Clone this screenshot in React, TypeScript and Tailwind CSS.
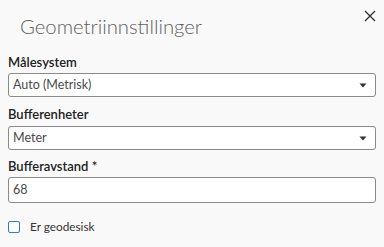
import React from "react";

const font = { fontFamily: "Lato, 'Open Sans', sans-serif" };

function Caret() {
  return (
    <svg width="8" height="5" viewBox="0 0 8 5" className="shrink-0">
      <path d="M0.5 0.5 L7.5 0.5 L4 4.5 Z" fill="#333" />
    </svg>
  );
}

function Select({ value }: { value: string }) {
  return (
    <div className="flex h-[24px] items-center justify-between rounded-[3px] border border-[#8a8a8a] bg-white pl-[4px] pr-[8px]">
      <span className="text-[12.5px] text-[#4a4a4a]">{value}</span>
      <Caret />
    </div>
  );
}

export default function App() {
  return (
    <div className="h-[247px] w-[384px] bg-[#f9f9f9] text-[#333]" style={font}>
      <div className="flex items-start justify-between pl-[20px] pr-[7px] pt-[8px]">
        <h1 className="mt-[4px] text-[20.3px] font-light leading-[28px] text-[#616161]">Geometriinnstillinger</h1>
        <svg width="14" height="14" viewBox="0 0 14 14" className="mt-[1px]">
          <path d="M2 2 L12 12 M12 2 L2 12" stroke="#333" strokeWidth="1.4" />
        </svg>
      </div>
      <div className="flex flex-col px-[8px] pt-[13px]">
        <label className="text-[13px] font-semibold leading-[18px] text-[#222]">Målesystem</label>
        <div className="mt-[2px]">
          <Select value="Auto (Metrisk)" />
        </div>
        <label className="mt-[8px] text-[13px] font-semibold leading-[18px] text-[#222]">Bufferenheter</label>
        <div className="mt-[3px]">
          <Select value="Meter" />
        </div>
        <label className="mt-[7px] text-[13px] font-semibold leading-[18px] text-[#222]">Bufferavstand *</label>
        <div className="mt-[2px] flex h-[26px] items-center rounded-[3px] border border-[#8a8a8a] bg-white pl-[4px]">
          <span className="text-[12.5px] text-[#4a4a4a]">68</span>
        </div>
        <div className="mt-[15px] flex items-center gap-[10px]">
          <div className="h-[12px] w-[12px] rounded-[2px] border-[1.5px] border-[#2a7ad6] bg-white" />
          <span className="text-[11.8px] text-[#333]">Er geodesisk</span>
        </div>
      </div>
    </div>
  );
}
